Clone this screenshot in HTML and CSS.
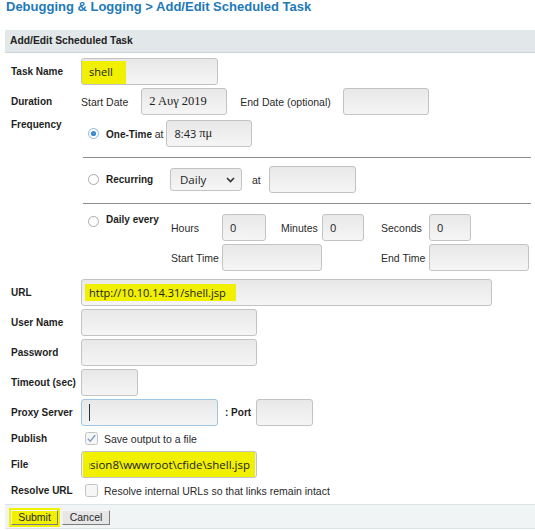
FILE: index.html
```html
<!DOCTYPE html>
<html>
<head>
<meta charset="utf-8">
<link rel="stylesheet" href="styles.css">
</head>
<body>
<h1 class="crumb">Debugging &amp; Logging &gt; Add/Edit Scheduled Task</h1>
<form class="panel">
  <div class="panel-head">Add/Edit Scheduled Task</div>
  <div class="form">
    <span class="lbl">Task Name</span>
    <div class="cell"><input class="field w137 hl-shell" value="shell"></div>

    <span class="lbl">Duration</span>
    <div class="cell line">
      <span class="txt">Start Date</span>
      <input class="field w86 date" value="2 Αυγ 2019">
      <span class="txt">End Date (optional)</span>
      <input class="field w86 end">
    </div>

    <span class="lbl lbl-top">Frequency</span>
    <div class="freq">
      <div class="sub sub1">
        <svg class="radio" width="11" height="11" viewBox="0 0 11 11"><circle cx="5.5" cy="5.5" r="5" fill="#fff" stroke="#8db6dc"/><circle cx="5.5" cy="5.5" r="2.6" fill="#3f8ccf"/></svg>
        <span class="opt">One-Time <span class="reg">at</span></span>
        <div class="field w86 fake">8:43 <span class="greek">πμ</span></div>
      </div>
      <div class="sub sub2">
        <svg class="radio" width="11" height="11" viewBox="0 0 11 11"><circle cx="5.5" cy="5.5" r="5" fill="#fff" stroke="#a9a9a9"/></svg>
        <span class="opt optw">Recurring</span>
        <div class="selwrap">
          <select class="sel"><option>Daily</option></select>
          <svg class="chev" width="9" height="6" viewBox="0 0 9 6"><polyline points="1,1 4.5,4.5 8,1" fill="none" stroke="#333" stroke-width="1.6"/></svg>
        </div>
        <span class="txt at2">at</span>
        <input class="field w87">
      </div>
      <div class="sub sub3">
        <svg class="radio" width="11" height="11" viewBox="0 0 11 11"><circle cx="5.5" cy="5.5" r="5" fill="#fff" stroke="#a9a9a9"/></svg>
        <span class="opt optw">Daily every</span>
        <div class="every">
          <span class="txt">Hours</span>
          <input class="field num" value="0">
          <span class="txt ind15">Minutes</span>
          <input class="field num" value="0">
          <span class="txt ind17">Seconds</span>
          <input class="field num" value="0">
          <span class="txt">Start Time</span>
          <input class="field span2">
          <span class="txt ind17">End Time</span>
          <input class="field w100">
        </div>
      </div>
    </div>

    <span class="lbl">URL</span>
    <div class="cell"><input class="field w411 hl-url" value="http://10.10.14.31/shell.jsp"></div>

    <span class="lbl">User Name</span>
    <div class="cell"><input class="field w176"></div>

    <span class="lbl">Password</span>
    <div class="cell"><input class="field w176" type="password"></div>

    <span class="lbl">Timeout (sec)</span>
    <div class="cell"><input class="field w57"></div>

    <span class="lbl">Proxy Server</span>
    <div class="cell line">
      <input class="field w137 focused">
      <span class="lbl-inline">: Port</span>
      <input class="field w57">
    </div>

    <span class="lbl">Publish</span>
    <div class="cell check">
      <svg class="box" width="13" height="13" viewBox="0 0 13 13"><rect x="0.5" y="0.5" width="12" height="12" rx="2" fill="#f6f6f6" stroke="#c3c3c3"/><polyline points="2.8,6.6 5.2,9.2 10.2,3.2" fill="none" stroke="#7d9dc2" stroke-width="1.4"/></svg>
      <span class="txt">Save output to a file</span>
    </div>

    <span class="lbl">File</span>
    <div class="cell"><input class="field w176 hl-file" value="C:\ColdFusion8\wwwroot\cfide\shell.jsp"></div>

    <span class="lbl">Resolve URL</span>
    <div class="cell check">
      <svg class="box" width="13" height="13" viewBox="0 0 13 13"><rect x="0.5" y="0.5" width="12" height="12" rx="2" fill="#f6f6f6" stroke="#c3c3c3"/></svg>
      <span class="txt">Resolve internal URLs so that links remain intact</span>
    </div>
  </div>
  <div class="panel-foot">
    <button type="button" class="btn submit">Submit</button>
    <button type="button" class="btn cancel">Cancel</button>
  </div>
</form>
</body>
</html>
```

FILE: styles.css
```css
* { box-sizing: border-box; }

body {
  margin: 0;
  width: 535px;
  overflow: hidden;
  background: #fff;
  color: #222;
  font-family: "Liberation Sans", Arial, sans-serif;
}

.crumb {
  margin: 0 0 17px 6px;
  font-size: 13px;
  line-height: 13px;
  font-weight: bold;
  color: #2279b8;
  white-space: nowrap;
}

.panel {
  margin: 0 0 0 5px;
  width: 530px;
}

.panel-head {
  height: 23px;
  line-height: 22px;
  padding-left: 5px;
  background: #e2e7e9;
  border-bottom: 1px solid #cbd4d7;
  font-size: 10.3px;
  font-weight: bold;
  color: #222;
}

.form {
  display: grid;
  grid-template-columns: 76px 454px;
  row-gap: 3px;
  align-items: center;
  padding: 5px 0 4px;
}

.lbl {
  padding-left: 6px;
  font-size: 10px;
  font-weight: bold;
  color: #1e1e1e;
  white-space: nowrap;
}

.lbl-top {
  align-self: start;
  padding-top: 1px;
  line-height: 12px;
}

.cell {
  display: flex;
  align-items: center;
  min-height: 27px;
}

.line { gap: 13px; }
.line .end { margin-left: -1px; }

.txt {
  font-size: 10.5px;
  color: #2a2a2a;
  white-space: nowrap;
}

.field {
  height: 27px;
  border: 1px solid #c3c3c3;
  border-radius: 3px;
  background: linear-gradient(#e8e8e8, #f5f5f5);
  font-family: "Open Sans", "Noto Sans", sans-serif;
  font-size: 11px;
  color: #222;
  padding: 0 7px;
  outline: none;
  margin: 0;
}

.w57 { width: 57px; }
.w86 { width: 86px; }
.w87 { width: 87px; }
.w100 { width: 100px; }
.w137 { width: 137px; }
.w176 { width: 176px; }
.w411 { width: 411px; }

.date {
  font-family: "Liberation Serif", serif;
  font-size: 12.5px;
  padding-left: 7px;
}

.fake {
  display: flex;
  align-items: center;
  margin-left: 3px;
}

.greek {
  font-family: "Liberation Serif", serif;
  font-size: 12.5px;
  margin-left: 3px;
}

.hl-shell {
  background: linear-gradient(#f0f000, #f0f000) 0 2px / 44px 23px no-repeat,
              linear-gradient(#e8e8e8, #f5f5f5);
}

.hl-url {
  background: linear-gradient(#f0f000, #f0f000) 3px 4px / 151px 17px no-repeat,
              linear-gradient(#e8e8e8, #f5f5f5);
}

.hl-file {
  direction: rtl;
  font-size: 11.5px;
  padding-right: 6px;
  background: linear-gradient(#f0f000, #f0f000) 1px 0 / 172px 25px no-repeat,
              linear-gradient(#e8e8e8, #f5f5f5);
}

.focused {
  border-color: #9fc6e7;
  background: linear-gradient(#333, #333) 7px 4px / 1px 17px no-repeat,
              linear-gradient(#e8e8e8, #f5f5f5);
}

/* Frequency block */
.freq {
  margin: 0 4px 0 2px;
  display: flex;
  flex-direction: column;
}

.sub {
  display: flex;
  align-items: center;
  padding-left: 5px;
}

.sub1 {
  padding-top: 2px;
  padding-bottom: 10px;
  border-bottom: 1px solid #8c8c8c;
}

.sub2 {
  padding-top: 8px;
  padding-bottom: 10px;
  border-bottom: 1px solid #8c8c8c;
}

.sub3 {
  align-items: flex-start;
  padding-top: 10px;
  padding-bottom: 5px;
}

.radio {
  flex: none;
  margin-right: 7px;
}

.sub3 .radio { margin-top: 2px; }

.opt {
  font-size: 10px;
  font-weight: bold;
  color: #1e1e1e;
  white-space: nowrap;
}

.opt .reg {
  font-weight: normal;
  font-size: 10.5px;
  color: #2a2a2a;
}

.optw { width: 64px; flex: none; }

.sub3 .opt { line-height: 11px; }

.selwrap {
  position: relative;
  width: 72px;
  height: 23px;
}

.sel {
  appearance: none;
  -webkit-appearance: none;
  width: 72px;
  height: 23px;
  margin: 0;
  border: 1px solid #c3c3c3;
  border-radius: 3px;
  background: linear-gradient(#ebebeb, #f5f5f5);
  padding: 0 0 0 9px;
  font-family: "Open Sans", "Noto Sans", sans-serif;
  font-size: 11.5px;
  color: #222;
  outline: none;
}

.chev {
  position: absolute;
  right: 7px;
  top: 9px;
  pointer-events: none;
}

.at2 { margin: 0 8px 0 10px; }

.every {
  margin-left: 1px;
  display: grid;
  grid-template-columns: 51px 44px 56px 42px 65px 100px;
  grid-template-rows: 27px 27px;
  row-gap: 3px;
  align-items: center;
}

.every .num { width: 44px; }
.every .num ~ .num { width: 42px; }
.span2 { grid-column: 2 / 4; width: 100px; }
.every .w100 { grid-column: 6; }
.every .span2 + .ind17 { grid-column: 5; }
.ind15 { padding-left: 15px; }
.ind17 { padding-left: 17px; }

.lbl-inline {
  font-size: 10px;
  font-weight: bold;
  color: #1e1e1e;
  margin: 0 5px 0 7px;
  white-space: nowrap;
}

.line .lbl-inline + .field { margin-left: -13px; }
.line .focused + .lbl-inline { margin-left: -6px; }

.check {
  min-height: 19px;
  padding-left: 4px;
  gap: 6px;
}

.box { flex: none; }

/* Footer */
.panel-foot {
  height: 25px;
  display: flex;
  gap: 4px;
  padding: 5px 6px 3px;
  background: #f1f4f5;
  border-top: 1px solid #dce3e6;
  border-bottom: 1px solid #dce3e6;
}

.btn {
  height: 15px;
  margin: 0;
  padding: 0;
  font-family: "Liberation Sans", Arial, sans-serif;
  font-size: 10.5px;
  line-height: 13px;
  color: #2a2a2a;
  background: #e6e6e6;
  border: 1px solid;
  border-color: #f7f7f7 #7d7d7d #7d7d7d #f0f0f0;
}

.submit {
  width: 47px;
  background: #f0f000;
  box-shadow: 0 0 0 2px #f0f000;
}

.cancel { width: 48px; }
```
